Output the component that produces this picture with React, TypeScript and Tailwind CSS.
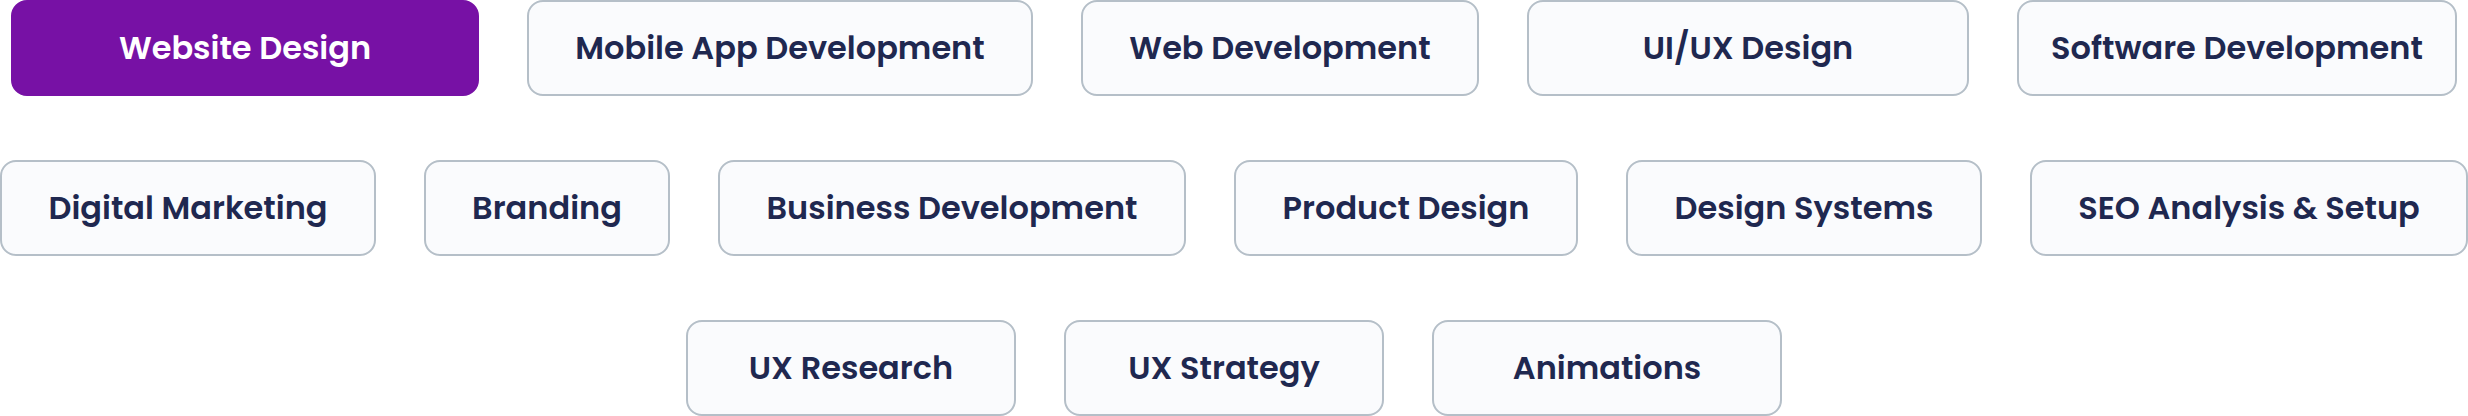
import { useState } from "react";
import clsx from "clsx";

const services = [
  { label: "Website Design", width: "w-[468px]" },
  { label: "Mobile App Development", width: "w-[506px]" },
  { label: "Web Development", width: "w-[398px]" },
  { label: "UI/UX Design", width: "w-[442px]" },
  { label: "Software Development", width: "w-[440px]" },
  { label: "Digital Marketing", width: "w-[376px]" },
  { label: "Branding", width: "w-[246px]" },
  { label: "Business Development", width: "w-[468px]" },
  { label: "Product Design", width: "w-[344px]" },
  { label: "Design Systems", width: "w-[356px]" },
  { label: "SEO Analysis & Setup", width: "w-[438px]" },
  { label: "UX Research", width: "w-[330px]" },
  { label: "UX Strategy", width: "w-[320px]" },
  { label: "Animations", width: "w-[350px]" },
];

export default function App() {
  const [active, setActive] = useState("Website Design");

  return (
    <main className="flex flex-wrap justify-center gap-x-12 gap-y-16 bg-white font-['Poppins','Inter',sans-serif]">
      {services.map(({ label, width }) => (
        <button
          key={label}
          type="button"
          aria-pressed={active === label}
          onClick={() => setActive(label)}
          className={clsx(
            "h-24 max-w-full cursor-pointer rounded-2xl border-2 text-center text-[32px] leading-12 font-semibold whitespace-nowrap",
            width,
            active === label
              ? "border-[#7711a5] bg-[#7711a5] text-white"
              : "border-[#b5bfc8] bg-[#fafbfd] text-[#1f2850]",
          )}
        >
          {label}
        </button>
      ))}
    </main>
  );
}
